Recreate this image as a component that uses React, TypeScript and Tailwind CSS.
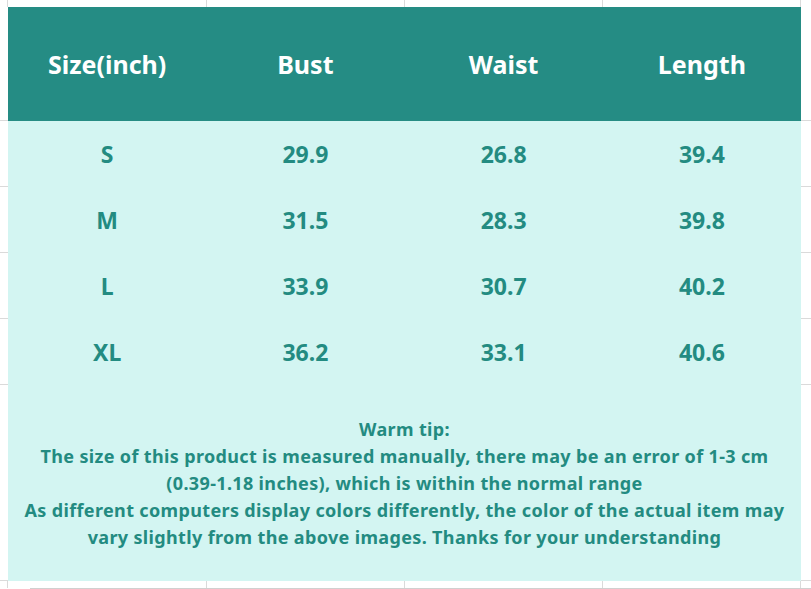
const rows = [
  ["S", "29.9", "26.8", "39.4"],
  ["M", "31.5", "28.3", "39.8"],
  ["L", "33.9", "30.7", "40.2"],
  ["XL", "36.2", "33.1", "40.6"],
];

const headers = ["Size(inch)", "Bust", "Waist", "Length"];

// gray spreadsheet grid strip above/below the chart
function GridStrip({ height }: { height: string }) {
  return (
    <div className={`flex ${height}`}>
      <div className="w-[8px] shrink-0 border-r border-[#dadada]" />
      <div className="w-[199px] shrink-0 border-r border-[#dadada]" />
      <div className="w-[198px] shrink-0 border-r border-[#dadada]" />
      <div className="w-[198px] shrink-0 border-r border-[#dadada]" />
      <div className="w-[198px] shrink-0 border-r border-[#dadada]" />
      <div className="flex-1" />
    </div>
  );
}

function Row({ children, height }: { children: React.ReactNode; height: string }) {
  return (
    <div className={`flex ${height}`}>
      <div className="w-[8px] shrink-0 border-b border-[#dadada]" />
      <div className="w-[793px] shrink-0 flex">{children}</div>
      <div className="flex-1 border-b border-[#dadada]" />
    </div>
  );
}

export default function App() {
  return (
    <div
      className="w-[811px] h-[589px] bg-white overflow-hidden"
      style={{ fontFamily: '"Noto Sans", "Open Sans", sans-serif' }}
    >
      <GridStrip height="h-[7px]" />

      <Row height="h-[114px]">
        <div className="flex-1 flex bg-[#258c84]">
          {headers.map((h) => (
            <div key={h} className="flex-1 flex items-center justify-center text-white text-[25px] font-bold pt-[2px]">
              {h}
            </div>
          ))}
        </div>
      </Row>

      {rows.map((r) => (
        <Row key={r[0]} height="h-[66px]">
          <div className="flex-1 flex bg-[#d3f5f2]">
            {r.map((v, i) => (
              <div key={i} className="flex-1 flex items-center justify-center text-[#238b81] text-[23px] font-bold">
                {v}
              </div>
            ))}
          </div>
        </Row>
      ))}

      <Row height="h-[196px]">
        <div className="flex-1 flex flex-col items-center justify-center bg-[#d3f5f2] text-[#238b81] text-[18px] font-bold leading-[27px] tracking-[0.35px] text-center">
          <p>Warm tip:</p>
          <p>
            The size of this product is measured manually, there may be an error of 1-3 cm
            <br />
            (0.39-1.18 inches), which is within the normal range
          </p>
          <p>
            As different computers display colors differently, the color of the actual item may
            <br />
            vary slightly from the above images. Thanks for your understanding
          </p>
        </div>
      </Row>

      <GridStrip height="h-[7px]" />
      <div className="ml-[30px] border-t border-[#d0d0d0]" />
    </div>
  );
}
